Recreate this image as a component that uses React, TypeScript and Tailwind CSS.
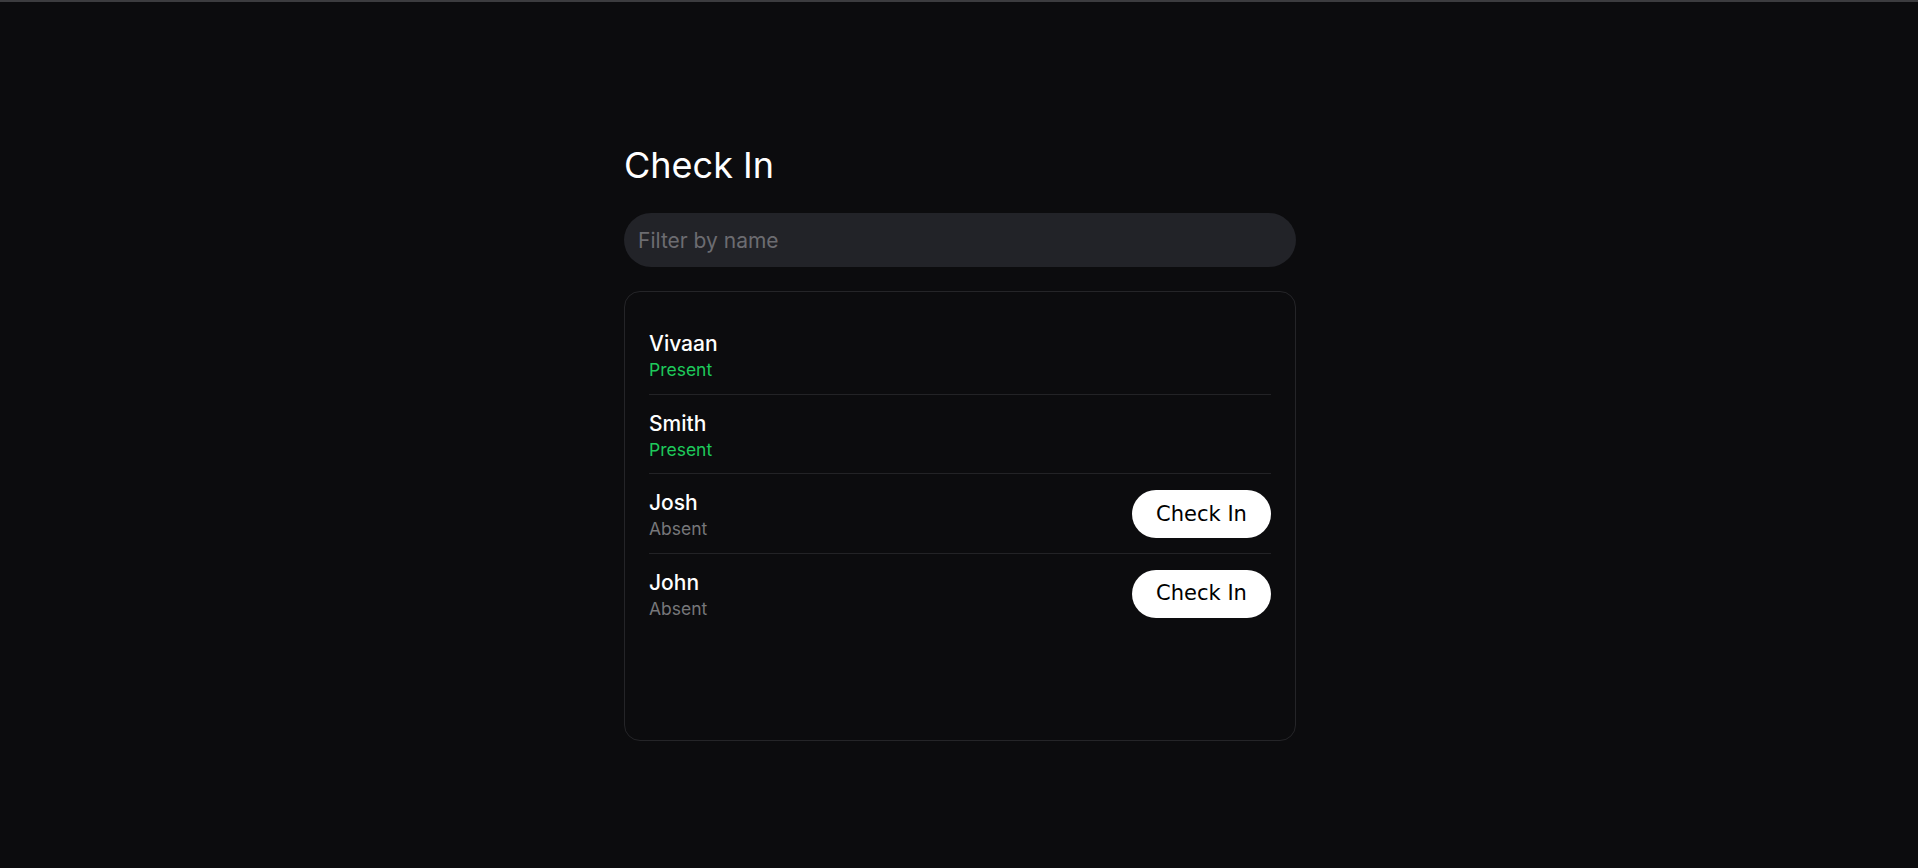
import React, { useState } from "react";

type Person = { name: string; present: boolean };

const initial: Person[] = [
  { name: "Vivaan", present: true },
  { name: "Smith", present: true },
  { name: "Josh", present: false },
  { name: "John", present: false },
];

export default function App() {
  const [people, setPeople] = useState<Person[]>(initial);
  const [filter, setFilter] = useState("");
  const shown = people.filter((p) =>
    p.name.toLowerCase().includes(filter.toLowerCase())
  );

  return (
    <div
      className="min-h-screen bg-[#0c0c0e] text-white"
      style={{ fontFamily: "Inter, 'Noto Sans', sans-serif" }}
    >
      <div className="h-[2px] bg-[#3c3c3f]" />
      <div className="mx-auto w-[672px] translate-x-[1px] pt-[143px]">
        <h1 className="text-4xl font-normal leading-10 text-white">Check In</h1>
        <input
          value={filter}
          onChange={(e) => setFilter(e.target.value)}
          placeholder="Filter by name"
          className="mt-7 block h-[54px] w-full rounded-full bg-[#222328] px-3.5 text-[21px] text-white outline-none placeholder:text-[#6c6c71]"
        />
        <div className="mt-6 h-[450px] rounded-2xl border border-[#252528] px-6 pb-6 pt-[23px]">
          {shown.map((p, i) => (
            <div
              key={p.name}
              className={`flex items-center justify-between pb-[11.7px] pt-[15px] ${
                i < shown.length - 1 ? "border-b border-[#232326]" : ""
              }`}
            >
              <div className="flex flex-col">
                <span className="text-[21px] font-medium leading-7 text-white">
                  {p.name}
                </span>
                <span
                  className={`text-[17.5px] leading-6 ${
                    p.present ? "text-[#1ec95b]" : "text-[#77777a]"
                  }`}
                >
                  {p.present ? "Present" : "Absent"}
                </span>
              </div>
              {!p.present && (
                <button
                  onClick={() =>
                    setPeople((prev) =>
                      prev.map((q) =>
                        q.name === p.name ? { ...q, present: true } : q
                      )
                    )
                  }
                  className="h-12 w-[139px] -translate-y-[1px] rounded-full bg-white text-[21px] text-black"
                  style={{ fontFamily: "'DejaVu Sans', sans-serif" }}
                >
                  Check In
                </button>
              )}
            </div>
          ))}
        </div>
      </div>
    </div>
  );
}
